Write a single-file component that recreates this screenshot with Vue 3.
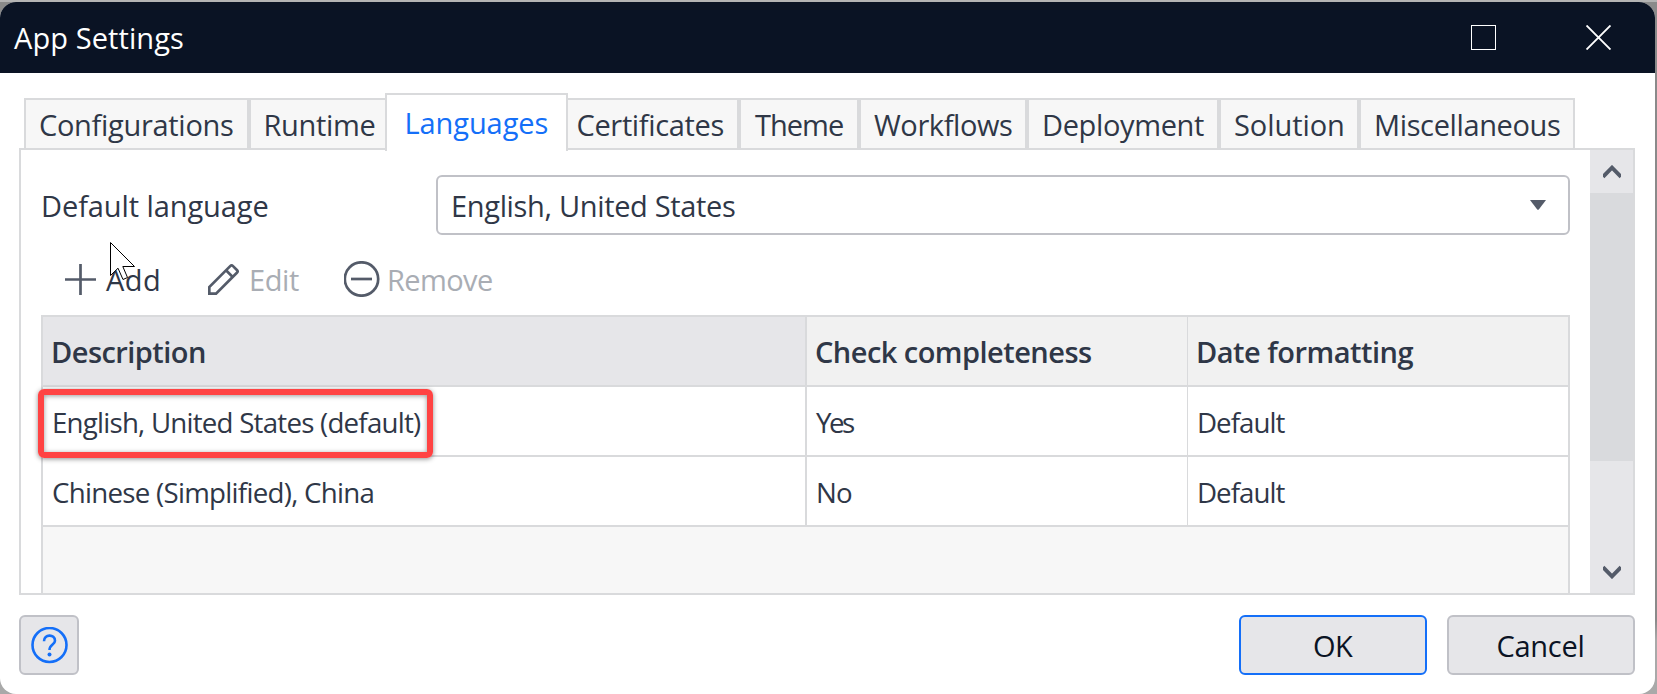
<script setup>
const tabs = [
  { label: 'Configurations', w: 225, x: 16, tw: 193 },
  { label: 'Runtime', w: 138, x: 16.5, tw: 109 },
  { label: 'Languages', w: 183, x: 21.5, tw: 141, active: true },
  { label: 'Certificates', w: 173, x: 11.5, tw: 146 },
  { label: 'Theme', w: 120, x: 16, tw: 88 },
  { label: 'Workflows', w: 168, x: 15, tw: 138 },
  { label: 'Deployment', w: 192, x: 17, tw: 160 },
  { label: 'Solution', w: 140, x: 16, tw: 108 },
  { label: 'Miscellaneous', w: 216, x: 17, tw: 184 },
]
const columns = [
  { label: 'Description', x: 10, tw: 152 },
  { label: 'Check completeness', x: 9, tw: 275 },
  { label: 'Date formatting', x: 10, tw: 215.5 },
]
const rows = [
  [{ t: 'English, United States (default)', x: 11, tw: 367 }, { t: 'Yes', x: 9, tw: 38 }, { t: 'Default', x: 11, tw: 86.5 }],
  [{ t: 'Chinese (Simplified), China', x: 10, tw: 320.5 }, { t: 'No', x: 11, tw: 34 }, { t: 'Default', x: 11, tw: 86.5 }],
]

const ctx = document.createElement('canvas').getContext('2d')

function fit(el, { value }) {
  const cs = getComputedStyle(el)
  ctx.font = `${cs.fontWeight} ${cs.fontSize} ${cs.fontFamily}`
  const m = ctx.measureText(el.textContent)
  const ink = m.actualBoundingBoxLeft + m.actualBoundingBoxRight
  el.style.letterSpacing = `${(value - ink) / (el.textContent.length - 1)}px`
  el.style.marginLeft = `${m.actualBoundingBoxLeft}px`
}
const vFit = { mounted: fit }
</script>

<template>
  <div class="backdrop">
    <div class="window">
      <header class="titlebar">
        <span v-fit="169" class="title">App Settings</span>
        <svg class="max" width="25" height="25" viewBox="0 0 25 25"><rect x=".5" y=".5" width="24" height="24" /></svg>
        <svg class="close" width="25" height="25" viewBox="0 0 25 25"><path d="M.5 .5 24.5 24.5M24.5 .5 .5 24.5" /></svg>
      </header>

      <nav class="tabs">
        <div v-for="t in tabs" :key="t.label" class="tab" :class="{ active: t.active }" :style="{ width: t.w + 'px', paddingLeft: t.x - 2 + 'px' }">
          <span v-fit="t.tw">{{ t.label }}</span>
        </div>
      </nav>

      <section class="panel">
        <div class="content">
          <div class="field">
            <label class="field-label"><span v-fit="224.5">Default language</span></label>
            <div class="select">
              <span v-fit="282">English, United States</span>
              <svg width="16" height="10" viewBox="0 0 16 10"><path d="M0 0H16L9 9.2Q8 10.4 7 9.2Z" /></svg>
            </div>
          </div>

          <div class="toolbar">
            <div class="tool add">
              <svg width="31" height="31" viewBox="0 0 31 31"><path d="M15.5 0V31M0 15.5H31" /></svg>
              <span v-fit="53">Add</span>
            </div>
            <div class="tool edit off">
              <svg width="31" height="31" viewBox="0 0 31 31"><path d="M1.3 29.7V23L22.2 2.1Q23.6 .7 25 2.1L28.9 6Q30.3 7.4 28.9 8.8L8 29.7ZM18 6.3 24.7 13" /></svg>
              <span v-fit="48">Edit</span>
            </div>
            <div class="tool remove off">
              <svg width="36" height="36" viewBox="0 0 36 36"><circle cx="17.5" cy="18" r="16.7" /><path d="M7 18H28" /></svg>
              <span v-fit="103">Remove</span>
            </div>
          </div>

          <div class="grid">
            <div class="row head">
              <div v-for="c in columns" :key="c.label" class="cell" :style="{ paddingLeft: c.x + 'px' }"><span v-fit="c.tw">{{ c.label }}</span></div>
            </div>
            <div v-for="(r, i) in rows" :key="i" class="row">
              <div v-for="(c, j) in r" :key="j" class="cell" :style="{ paddingLeft: c.x + 'px' }"><span v-fit="c.tw">{{ c.t }}</span></div>
            </div>
            <div class="highlight"></div>
          </div>
        </div>
        <div class="scrollbar">
          <div class="arrow"><svg width="18" height="14" viewBox="0 0 18 14"><path d="M0 11.8 9 2.6 18 11.8" /></svg></div>
          <div class="thumb"></div>
          <div class="arrow down"><svg width="18" height="14" viewBox="0 0 18 14"><path d="M0 2.2 9 11.4 18 2.2" /></svg></div>
        </div>
      </section>

      <footer class="footer">
        <button class="btn help">
          <svg width="37" height="37" viewBox="0 0 37 37"><circle cx="18.5" cy="18" r="17" /><path d="M13 14.3C13 6.8 24 6.8 24 13.7C24 17.9 18.5 17.3 18.5 23.1" /><circle class="dot" cx="18.5" cy="27.5" r="2" /></svg>
        </button>
        <button class="btn ok"><span v-fit="39">OK</span></button>
        <button class="btn"><span v-fit="85">Cancel</span></button>
      </footer>

      <svg class="cursor" width="28" height="42" viewBox="0 0 28 42"><path d="M.5 .5V33.5L8 26.2 13 37.5 17.5 35.5 12.8 24.5H24.5Z" /></svg>
    </div>
  </div>
</template>

<style>
html, body { margin: 0; overflow: hidden; }
</style>

<style scoped>
.backdrop { width: 1657px; height: 694px; box-sizing: border-box; padding: 2px 2px 0 0; background: linear-gradient(#b4b4b4 0 2px, transparent 2px), linear-gradient(#8a8a8a 0 620px, #a9a9a9 640px); overflow: hidden; }
.backdrop * { box-sizing: border-box; }
.window { position: relative; width: 1655px; height: 692px; background: #fff; border-radius: 16px; overflow: hidden; font-family: "Open Sans", "Noto Sans", sans-serif; font-size: 29px; line-height: 40px; color: #2f3747; white-space: nowrap; font-kerning: normal; }
.titlebar { height: 71px; background: #0a1324; color: #fff; display: flex; align-items: center; padding: 0 44px 0 14px; }
.title { margin-right: auto; }
.titlebar svg { fill: none; stroke: #fff; }
.max { stroke-width: 1; margin-right: 90px; }
.close { stroke-width: 1.9; }
.tabs { display: flex; margin: 20px 0 -2px 24px; height: 57px; position: relative; z-index: 1; }
.tab { height: 52px; border: 2px solid #d9dadc; background: #f7f7f7; padding-top: 5px; flex: none; margin-top: 5px; }
.tab.active { height: 58px; margin: 0 -2px; border-bottom: 0; background: #fff; color: #146ff8; padding-top: 8px; position: relative; }
.panel { display: flex; margin: 0 20px 0 19px; height: 447px; border: 2px solid #d9dadc; }
.content { width: 1569px; padding: 25px 0 0 20px; display: flex; flex-direction: column; }
.field { display: flex; height: 60px; align-items: center; }
.field-label { width: 395px; padding: 2px 0 0 2px; }
.select { width: 1134px; height: 60px; border: 2px solid #c0c1c7; border-radius: 6px; display: flex; align-items: center; justify-content: space-between; padding: 0 22px 0 15px; }
.select span { padding-top: 2px; }
.select svg { fill: #545b69; }
.toolbar { height: 80px; display: flex; align-items: center; padding: 8px 0 0 24px; }
.tool { display: flex; align-items: center; height: 40px; }
.tool svg { flex: none; fill: none; stroke: #545b69; stroke-width: 2.7; }
.tool span { padding-top: 2px; }
.add { width: 143px; gap: 10px; }
.edit { width: 136px; gap: 12px; }
.remove { gap: 9px; }
.off { color: #a9adb4; }
.grid { position: relative; width: 1529px; flex: 1; border: 2px solid #d9dadc; border-bottom: 0; background: #f7f7f7; }
.row { display: grid; grid-template-columns: 764px 381px 380px; height: 70px; border-bottom: 2px solid #d9dadc; background: #fff; font-size: 27.7px; }
.cell { display: flex; align-items: center; border-right: 1px solid #d9dadc; padding-top: 2px; }
.cell:first-child { border-right-width: 2px; }
.cell:last-child { border-right: 0; }
.head { background: #f1f1f1; font-weight: 600; font-size: 29px; }
.head .cell:first-child { background: #e6e6e9; }
.highlight { position: absolute; left: -5px; top: 72px; width: 395px; height: 69px; border: 6px solid #ff4343; border-radius: 6px; box-shadow: 0 1px 5px rgba(0,0,0,.45), inset 0 1px 5px rgba(0,0,0,.4); }
.scrollbar { width: 43px; background: #e6e6e9; display: flex; flex-direction: column; }
.arrow { height: 43px; display: flex; align-items: center; justify-content: center; }
.arrow svg { fill: none; stroke: #545b69; stroke-width: 3.8; }
.thumb { height: 268px; background: #d9dadd; }
.arrow.down { margin-top: auto; }
.footer { display: flex; gap: 20px; margin: 20px 20px 0 19px; }
.btn { width: 188px; height: 60px; padding: 2px 0 0; border: 2px solid #c0c1c7; border-radius: 6px; background: #e6e6e9; color: #0a1324; font: inherit; display: flex; align-items: center; justify-content: center; }
.help { width: 60px; margin-right: auto; padding: 0; }
.help svg { fill: none; stroke: #146ff8; stroke-width: 2.6; }
.help .dot { fill: #146ff8; stroke: none; }
.ok { border-color: #146ff8; }
.cursor { position: absolute; left: 110px; top: 240px; fill: #fff; stroke: #000; stroke-width: 1; }
</style>
